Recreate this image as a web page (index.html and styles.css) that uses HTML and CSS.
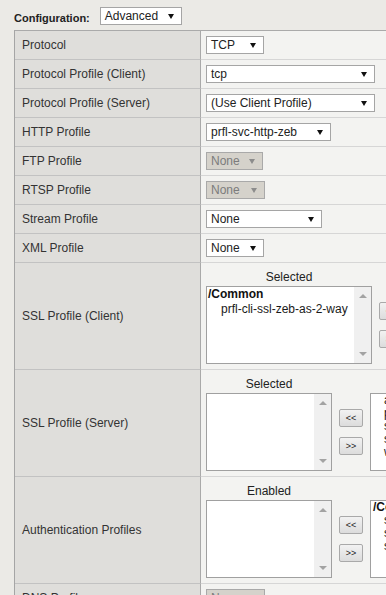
FILE: index.html
```html
<!DOCTYPE html>
<html lang="en">

<head>
    <meta charset="utf-8">
    <meta name="viewport" content="width=device-width, initial-scale=1.0">
    <title>Virtual Server Configuration</title>
    <link rel="stylesheet" href="styles.css">
</head>

<body>
    <div class="config">
        <span class="config-label">Configuration:</span>
        <div class="select w-advanced"><span>Advanced</span><i class="arrow"></i></div>
    </div>

    <div class="props">
        <div class="label">Protocol</div>
        <div class="value"><div class="select w-tcp"><span>TCP</span><i class="arrow"></i></div></div>

        <div class="label">Protocol Profile (Client)</div>
        <div class="value"><div class="select w-wide"><span>tcp</span><i class="arrow"></i></div></div>

        <div class="label">Protocol Profile (Server)</div>
        <div class="value"><div class="select w-wide"><span>(Use Client Profile)</span><i class="arrow"></i></div></div>

        <div class="label">HTTP Profile</div>
        <div class="value"><div class="select w-http"><span>prfl-svc-http-zeb</span><i class="arrow"></i></div></div>

        <div class="label">FTP Profile</div>
        <div class="value"><div class="select disabled w-ftp"><span>None</span><i class="arrow"></i></div></div>

        <div class="label">RTSP Profile</div>
        <div class="value"><div class="select disabled w-rtsp"><span>None</span><i class="arrow"></i></div></div>

        <div class="label">Stream Profile</div>
        <div class="value"><div class="select w-stream"><span>None</span><i class="arrow"></i></div></div>

        <div class="label">XML Profile</div>
        <div class="value"><div class="select w-tcp"><span>None</span><i class="arrow"></i></div></div>

        <div class="label tall">SSL Profile (Client)</div>
        <div class="value tall">
            <div class="dual">
                <div class="col">
                    <div class="col-head">Selected</div>
                    <div class="listbox w-big">
                        <div class="list-items">
                            <div class="group">/Common</div>
                            <div class="item">prfl-cli-ssl-zeb-as-2-way</div>
                        </div>
                        <div class="scroll"><i class="up"></i><i class="down"></i></div>
                    </div>
                </div>
                <div class="movers">
                    <div class="btn">&lt;&lt;</div>
                    <div class="btn">&gt;&gt;</div>
                </div>
                <div class="col">
                    <div class="col-head">Available</div>
                    <div class="listbox w-big">
                        <div class="list-items small">
                            <div class="group">/Common</div>
                            <div class="item">clientssl</div>
                        </div>
                    </div>
                </div>
            </div>
        </div>

        <div class="label tall">SSL Profile (Server)</div>
        <div class="value tall">
            <div class="dual">
                <div class="col">
                    <div class="col-head">Selected</div>
                    <div class="listbox w-small">
                        <div class="list-items"></div>
                        <div class="scroll"><i class="up"></i><i class="down"></i></div>
                    </div>
                </div>
                <div class="movers">
                    <div class="btn">&lt;&lt;</div>
                    <div class="btn">&gt;&gt;</div>
                </div>
                <div class="col">
                    <div class="col-head">Available</div>
                    <div class="listbox w-small">
                        <div class="list-items small">
                            <div class="item">apm-default-serverssl</div>
                            <div class="item">pcoip-default-serverssl</div>
                            <div class="item">serverssl</div>
                            <div class="item">serverssl-insecure</div>
                            <div class="item">wom-default-serverssl</div>
                        </div>
                    </div>
                </div>
            </div>
        </div>

        <div class="label tall">Authentication Profiles</div>
        <div class="value tall">
            <div class="dual">
                <div class="col">
                    <div class="col-head">Enabled</div>
                    <div class="listbox w-small">
                        <div class="list-items"></div>
                        <div class="scroll"><i class="up"></i><i class="down"></i></div>
                    </div>
                </div>
                <div class="movers">
                    <div class="btn">&lt;&lt;</div>
                    <div class="btn">&gt;&gt;</div>
                </div>
                <div class="col">
                    <div class="col-head">Available</div>
                    <div class="listbox w-small">
                        <div class="list-items small">
                            <div class="group">/Common</div>
                            <div class="item">ssl_cc_ldap</div>
                            <div class="item">ssl_crldp</div>
                            <div class="item">ssl_ocsp</div>
                        </div>
                    </div>
                </div>
            </div>
        </div>

        <div class="label">DNS Profile</div>
        <div class="value"><div class="select disabled w-rtsp"><span>None</span><i class="arrow"></i></div></div>
    </div>
</body>

</html>
```

FILE: styles.css
```css
html,
body {
    overflow: hidden;
}

body {
    margin: 0;
    background-color: #ebeae6;
    font-family: "Liberation Sans", Arial, sans-serif;
    font-size: 12px;
    color: #333;
}

.config {
    display: flex;
    align-items: flex-start;
    gap: 10px;
    padding: 7px 0 0 14px;
    height: 18px;
}

.config-label {
    font-size: 11px;
    font-weight: bold;
    color: #222;
    margin-top: 5px;
}

/* fake select boxes */
.select {
    box-sizing: border-box;
    display: flex;
    align-items: center;
    justify-content: space-between;
    height: 18px;
    padding: 0 7px 0 4px;
    background-color: #fff;
    border: 1px solid #a5a5a5;
    color: #222;
    white-space: nowrap;
}

.arrow {
    width: 0;
    height: 0;
    border-left: 3px solid transparent;
    border-right: 3px solid transparent;
    border-top: 5px solid #111;
}

.select.disabled {
    background-color: #d5d2cb;
    border-color: #a9a9a9;
    color: #7c7c7c;
}

.select.disabled .arrow {
    border-top-color: #8c8c8c;
}

.w-advanced { width: 82px; }
.w-tcp { width: 58px; }
.w-wide { width: 169px; }
.w-http { width: 125px; }
.w-ftp { width: 57px; }
.w-rtsp { width: 59px; }
.w-stream { width: 116px; }

/* property grid */
.props {
    display: grid;
    grid-template-columns: 186px 440px;
    margin: 5px 0 0 14px;
    border-top: 1px solid #aaa;
    border-left: 1px solid #a5a5a5;
}

.label {
    box-sizing: border-box;
    height: 29px;
    display: flex;
    align-items: center;
    padding-left: 7px;
    background-color: #dfdedb;
    border-bottom: 1px solid #c2c2c2;
    border-right: 1px solid #a9a9a9;
    white-space: nowrap;
}

.value {
    box-sizing: border-box;
    height: 29px;
    display: flex;
    align-items: center;
    padding-left: 5px;
    background-color: #f3f3f1;
    border-bottom: 1px solid #d6d6d6;
}

.label.tall,
.value.tall {
    height: 107px;
}

.value.tall {
    align-items: flex-start;
    padding-top: 7px;
}

/* dual list boxes */
.dual {
    display: flex;
    align-items: flex-start;
}

.col {
    display: flex;
    flex-direction: column;
}

.col-head {
    text-align: center;
    line-height: 14px;
    margin-bottom: 2px;
    color: #222;
}

.listbox {
    box-sizing: border-box;
    display: flex;
    height: 78px;
    background-color: #fff;
    border: 1px solid #a0a0a0;
}

.w-big { width: 166px; }
.w-small { width: 126px; }

.list-items {
    flex: 1;
    overflow: hidden;
    padding-left: 1px;
    line-height: 15px;
    color: #1a1a1a;
    white-space: nowrap;
}

.list-items.small {
    line-height: 13px;
    padding-left: 2px;
}

.group {
    font-weight: bold;
    color: #111;
}

.item {
    padding-left: 13px;
}

.list-items.small .item {
    padding-left: 11px;
}

.scroll {
    width: 17px;
    background-color: #f0f0f0;
    display: flex;
    flex-direction: column;
    align-items: center;
    justify-content: space-between;
    padding: 7px 0;
    box-sizing: border-box;
}

.up,
.down {
    width: 0;
    height: 0;
    border-left: 4px solid transparent;
    border-right: 4px solid transparent;
}

.up {
    border-bottom: 4px solid #a3a3a3;
}

.down {
    border-top: 4px solid #a3a3a3;
}

.movers {
    display: flex;
    flex-direction: column;
    gap: 10px;
    margin: 32px 7px 0;
}

.btn {
    box-sizing: border-box;
    width: 24px;
    height: 18px;
    display: flex;
    align-items: center;
    justify-content: center;
    font-size: 9px;
    color: #222;
    background: linear-gradient(#f2f2f2, #dcdcdc);
    border: 1px solid #a9a9a9;
    border-radius: 2px;
}
```
